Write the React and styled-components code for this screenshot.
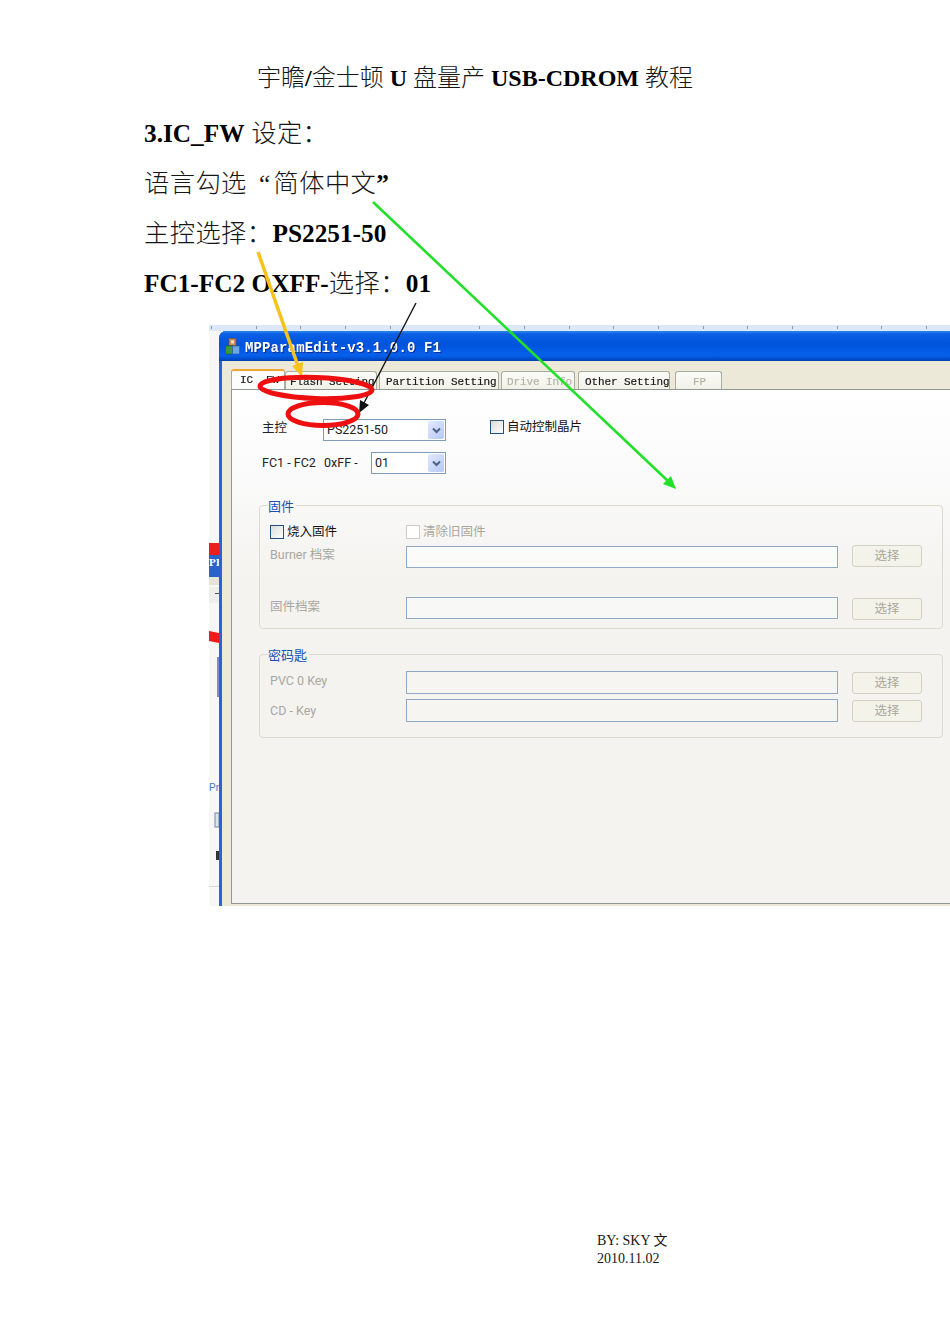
import React from "react";
import styled, { createGlobalStyle } from "styled-components";

const GlobalStyle = createGlobalStyle`
  html, body {
    margin: 0;
    background: #ffffff;
  }
  * {
    box-sizing: border-box;
  }
`;

const docFont = `"Liberation Serif", "Noto Sans CJK SC", serif`;
const uiFont = `Roboto, "Noto Sans CJK SC", sans-serif`;
const tabFont = `"Liberation Mono", "Noto Sans CJK SC", monospace`;

const Page = styled.div`
  position: relative;
  width: 950px;
  height: 1344px;
  overflow: hidden;
  padding-top: 63px;
  background: #fff;
  font-family: ${docFont};
  color: #161616;
`;

const Title = styled.h1`
  margin: 0 0 15px;
  font-size: 24px;
  line-height: 30px;
  font-weight: 300;
  text-align: center;
`;

const Line = styled.p`
  margin: 0 0 0 144px;
  font-size: 25.3px;
  line-height: 50px;
  font-weight: 300;
  letter-spacing: 0.4px;
`;

const B = styled.b`
  font-weight: 700;
  color: #000;
  letter-spacing: 0;
`;

const OpenQuote = styled.span`
  display: inline-block;
  width: 20px;
  padding-right: 3px;
  text-align: right;
`;

const Shot = styled.div`
  display: flex;
  flex-direction: column;
  width: 741px;
  height: 581px;
  margin: 17px 0 0 209px;
  overflow: hidden;
  filter: blur(0.45px);
`;

const Ruler = styled.div`
  flex: none;
  height: 6px;
  background:
    repeating-linear-gradient(90deg, transparent 0 2px, #8a98a8 2px 3px, transparent 3px 44.7px) 0 1px / 100% 3px no-repeat,
    #dce8f8;
`;

const Body = styled.div`
  flex: 1;
  display: flex;
  min-height: 0;
`;

const Strip = styled.svg`
  flex: none;
  width: 10px;
  height: 575px;
`;

const Win = styled.div`
  flex: 1;
  display: flex;
  flex-direction: column;
  min-width: 0;
  border-left: 3px solid #2a62dc;
  border-top-left-radius: 7px;
  background: #0058e0;
`;

const TitleBar = styled.div`
  flex: none;
  display: flex;
  align-items: center;
  gap: 5px;
  height: 30px;
  padding-left: 6px;
  margin-left: -3px;
  border-top-left-radius: 7px;
  background: linear-gradient(180deg, #2f86ee 0, #0a5fe4 3px, #0054dc 45%, #0660ec 82%, #0048c4 96%, #003aa8 100%);
`;

const TitleText = styled.span`
  padding-top: 3px;
  font-family: ${tabFont};
  font-size: 14px;
  font-weight: 700;
  letter-spacing: 0.12px;
  color: #fff;
  text-shadow: 1px 1px 0 #0a2f90;
`;

const Client = styled.div`
  flex: 1;
  display: flex;
  flex-direction: column;
  min-height: 0;
  padding: 8px 0 2px 9px;
  background: #ece9d8;
`;

const Tabs = styled.div`
  flex: none;
  display: flex;
  align-items: flex-end;
  height: 20px;
`;

const Tab = styled.div`
  flex: none;
  width: ${(p) => p.$w}px;
  height: ${(p) => (p.$active ? 20 : 18)}px;
  margin-left: ${(p) => p.$gap || 0}px;
  padding-left: ${(p) => p.$pad}px;
  border: 1px solid #a9aca0;
  border-bottom: none;
  border-radius: 3px 3px 0 0;
  border-top: ${(p) => (p.$active ? "2px solid #f0a830" : "1px solid #a9aca0")};
  background: ${(p) => (p.$active ? "#fdfdfb" : "linear-gradient(180deg, #fbfbf8, #f2f1e8)")};
  font-family: ${tabFont};
  font-size: 11px;
  line-height: ${(p) => (p.$active ? 18 : 20)}px;
  letter-spacing: -0.1px;
  -webkit-text-stroke: 0.2px ${(p) => (p.$off ? "#b4b3a6" : "#1a1a1a")};
  white-space: pre;
  overflow: hidden;
  color: ${(p) => (p.$off ? "#b4b3a6" : "#1a1a1a")};
`;

const Panel = styled.div`
  flex: 1;
  min-height: 0;
  padding: 29px 0 0 27px;
  border: 1px solid #8f9894;
  border-right: none;
  background: linear-gradient(180deg, #ffffff 0, #fafafa 90px, #f4f3ef 190px);
  font-family: ${uiFont};
  font-size: 12.5px;
  line-height: 16px;
  color: #222;
`;

const Row = styled.div`
  display: flex;
  align-items: center;
  height: 22px;
  margin: ${(p) => p.$mt || 0}px 0 0 3px;
`;

const Label = styled.span`
  flex: none;
  width: ${(p) => p.$w}px;
  margin-bottom: ${(p) => p.$mb || 0}px;
  color: ${(p) => (p.$off ? "#a8a8a0" : "#222")};
`;

const Select = styled.div`
  flex: none;
  display: flex;
  align-items: center;
  justify-content: space-between;
  width: ${(p) => p.$w}px;
  height: 22px;
  padding: 0 1px 0 3px;
  border: 1px solid #7f9db9;
  background: #fff;
`;

const Arrow = styled.span`
  display: flex;
  align-items: center;
  justify-content: center;
  width: 16px;
  height: 18px;
  border-radius: 2px;
  background: linear-gradient(135deg, #e2eafe, #b4c8f6);
`;

const Check = styled.label`
  display: flex;
  align-items: center;
  gap: 3px;
  margin-left: ${(p) => p.$ml || 0}px;
  margin-bottom: ${(p) => p.$mb || 0}px;
  color: ${(p) => (p.$off ? "#a8a8a0" : "#111")};
`;

const Box = styled.span`
  flex: none;
  width: 14px;
  height: 14px;
  border: 1px solid ${(p) => (p.$off ? "#cfcec4" : "#1c5180")};
  background: ${(p) => (p.$off ? "#fff" : "linear-gradient(135deg, #dcdcd6, #ffffff)")};
`;

const Group = styled.fieldset`
  width: 684px;
  margin: ${(p) => p.$mt}px 0 0;
  padding: ${(p) => p.$top}px 0 ${(p) => p.$bottom}px 10px;
  border: 1px solid #dcdbd0;
  border-radius: 4px;
`;

const Legend = styled.legend`
  margin-left: -2px;
  padding: 0 2px 0 0;
  font-size: 13px;
  line-height: 15px;
  color: #1a4fb4;
  transform: translateY(1px);
`;

const FormGrid = styled.div`
  display: grid;
  grid-template-columns: 122px 432px 70px;
  column-gap: 14px;
  align-items: start;
`;

const FieldLabel = styled.span`
  grid-column: 1;
  margin-top: ${(p) => p.$mt || 0}px;
  color: #a8a8a0;
`;

const Field = styled.div`
  grid-column: 2;
  height: ${(p) => p.$h || 22}px;
  margin-top: ${(p) => p.$mt || 0}px;
  border: 1px solid #8fa8c4;
  background: ${(p) => p.$bg || "#f6f5f2"};
`;

const PickButton = styled.div`
  grid-column: 3;
  display: flex;
  align-items: center;
  justify-content: center;
  height: 22px;
  margin-top: ${(p) => p.$mt || 0}px;
  border: 1px solid #d2d1c4;
  border-radius: 3px;
  background: #f4f3e9;
  color: #a8a8a0;
`;

const Footer = styled.div`
  margin: 326px 0 0 597px;
  font-size: 14px;
  line-height: 18px;
`;

const Marks = styled.svg`
  position: absolute;
  top: 0;
  left: 0;
  pointer-events: none;
  filter: blur(0.3px);
`;

const Chevron = () => (
  <svg width="9" height="7" viewBox="0 0 9 7">
    <path d="M1 1.5 L4.5 5 L8 1.5" fill="none" stroke="#4d6185" strokeWidth="2" />
  </svg>
);

const AppIcon = () => (
  <svg width="15" height="17" viewBox="0 0 15 17">
    <rect x="4" y="0.5" width="7" height="7" fill="#c98a5a" stroke="#7a4a2a" strokeWidth="0.6" />
    <rect x="0.5" y="8" width="7" height="8" fill="#3e9a3e" stroke="#1d5e1d" strokeWidth="0.6" />
    <rect x="7.5" y="8" width="7" height="8" fill="#6ea6e8" stroke="#2a5c9c" strokeWidth="0.6" />
    <rect x="6" y="2.5" width="3" height="3" fill="#f2e2c8" />
  </svg>
);

// bits of the window behind the dialog, peeking out on the left
const BehindStrip = () => (
  <Strip viewBox="0 0 10 575">
    <rect width="10" height="575" fill="#f7f7f5" />
    <rect y="212" width="10" height="12" fill="#ee1c1c" />
    <rect y="224" width="10" height="22" fill="#2a62c8" />
    <text x="0" y="235" fontSize="11" fontWeight="700" fontFamily="Liberation Serif, serif" fill="#fff">PI</text>
    <rect y="246" width="10" height="8" fill="#e6e4d8" />
    <rect y="256" width="10" height="16" fill="#eeeeea" />
    <rect x="6" y="262" width="4" height="1" fill="#555" />
    <path d="M0 300 L10 302 L10 312 L0 310 Z" fill="#ee1c1c" />
    <rect x="8" y="326" width="2" height="40" fill="#7a90c4" />
    <text x="0" y="460" fontSize="10" fontFamily="Liberation Sans, sans-serif" fill="#4a78c8">Pr</text>
    <rect x="6" y="482" width="4" height="14" fill="#dde6ee" stroke="#6e8aa8" />
    <rect x="7" y="520" width="3" height="9" fill="#333" />
    <rect y="555" width="10" height="1" fill="#d8d8d4" />
  </Strip>
);

function App() {
  return (
    <Page>
      <GlobalStyle />
      <Title>
        宇瞻<B>/</B>金士顿 <B>U</B> 盘量产 <B>USB-CDROM</B> 教程
      </Title>
      <Line>
        <B>3.IC_FW</B> 设定：
      </Line>
      <Line>
        语言勾选 <OpenQuote>“</OpenQuote>简体中文<B>”</B>
      </Line>
      <Line>
        主控选择：<B>PS2251-50</B>
      </Line>
      <Line>
        <B>FC1-FC2 OXFF-</B>选择：<B>01</B>
      </Line>

      <Shot>
        <Ruler />
        <Body>
          <BehindStrip />
          <Win>
            <TitleBar>
              <AppIcon />
              <TitleText>MPParamEdit-v3.1.0.0 F1</TitleText>
            </TitleBar>
            <Client>
              <Tabs>
                <Tab $active $w={54} $pad={8}>IC  FW</Tab>
                <Tab $w={92} $pad={4}>Flash Setting</Tab>
                <Tab $w={120} $gap={2} $pad={6}>Partition Setting</Tab>
                <Tab $off $w={74} $gap={2} $pad={5}>Drive Info</Tab>
                <Tab $w={92} $gap={3} $pad={6}>Other Setting</Tab>
                <Tab $off $w={47} $gap={5} $pad={17}>FP</Tab>
              </Tabs>
              <Panel>
                <Row>
                  <Label $w={61} $mb={5}>主控</Label>
                  <Select $w={123}>
                    PS2251-50
                    <Arrow><Chevron /></Arrow>
                  </Select>
                  <Check $ml={44} $mb={6}>
                    <Box />
                    自动控制晶片
                  </Check>
                </Row>
                <Row $mt={11}>
                  <Label $w={62} $mb={1}>FC1 - FC2</Label>
                  <Label $w={47} $mb={1}>0xFF -</Label>
                  <Select $w={75}>
                    01
                    <Arrow><Chevron /></Arrow>
                  </Select>
                </Row>

                <Group $mt={24} $top={11} $bottom={8}>
                  <Legend>固件</Legend>
                  <FormGrid>
                    <Check>
                      <Box />
                      烧入固件
                    </Check>
                    <Check $off>
                      <Box $off />
                      清除旧固件
                    </Check>
                    <span />
                    <FieldLabel $mt={7}>Burner 档案</FieldLabel>
                    <Field $mt={6} $bg="#fbfbfa" />
                    <PickButton $mt={5}>选择</PickButton>
                    <FieldLabel $mt={31}>固件档案</FieldLabel>
                    <Field $mt={29} $bg="#f8f8f6" />
                    <PickButton $mt={30}>选择</PickButton>
                  </FormGrid>
                </Group>

                <Group $mt={18} $top={9} $bottom={15}>
                  <Legend>密码匙</Legend>
                  <FormGrid>
                    <FieldLabel $mt={2}>PVC 0 Key</FieldLabel>
                    <Field $h={23} />
                    <PickButton $mt={1}>选择</PickButton>
                    <FieldLabel $mt={9}>CD - Key</FieldLabel>
                    <Field $h={23} $mt={5} />
                    <PickButton $mt={6}>选择</PickButton>
                  </FormGrid>
                </Group>
              </Panel>
            </Client>
          </Win>
        </Body>
      </Shot>

      <Footer>
        BY: SKY 文
        <br />
        2010.11.02
      </Footer>

      {/* hand drawn markup on top of the document */}
      <Marks width="950" height="1344" viewBox="0 0 950 1344">
        <path d="M373 202 L668 481" stroke="#22e02a" strokeWidth="2.6" fill="none" />
        <path d="M676 489 L663 484 L671 476 Z" fill="#22e02a" />
        <path d="M258 252 L298 366" stroke="#f6c21c" strokeWidth="3.5" fill="none" />
        <path d="M302 377 L292 366 L303 362 Z" fill="#f6c21c" />
        <path d="M416 303 L364 403" stroke="#111" strokeWidth="1.4" fill="none" />
        <path d="M359 413 L360 400 L369 405 Z" fill="#111" />
        <ellipse cx="316" cy="388" rx="56" ry="10.5" transform="rotate(2 316 388)" fill="none" stroke="#ee1010" strokeWidth="5" />
        <ellipse cx="323" cy="414" rx="35" ry="11.5" fill="none" stroke="#ee1010" strokeWidth="5" />
      </Marks>
    </Page>
  );
}

export default App;
